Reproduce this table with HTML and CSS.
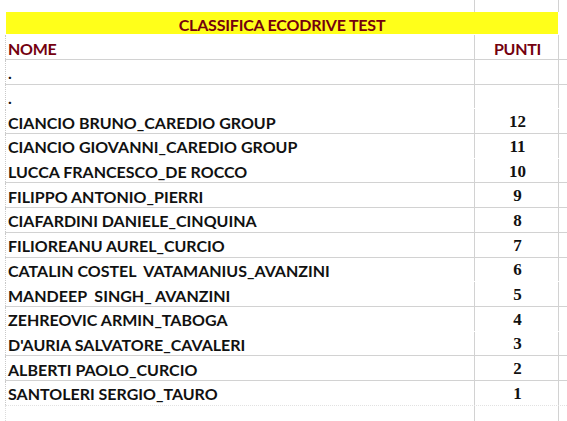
FILE: index.html
```html
<!DOCTYPE html>
<html lang="it">
<head>
<meta charset="utf-8">
<title>Classifica Ecodrive Test</title>
<link rel="stylesheet" href="styles.css">
</head>
<body>
<div class="sheet">
  <div class="row top">
    <div class="c name"></div><div class="c pts"></div><div class="c pad"></div>
  </div>
  <div class="row title nb">
    <div class="band">CLASSIFICA ECODRIVE TEST</div><div class="c pad"></div>
  </div>
  <div class="row head">
    <div class="c name">NOME</div><div class="c pts">PUNTI</div><div class="c pad"></div>
  </div>
  <div class="row"><div class="c name">.</div><div class="c pts"></div><div class="c pad"></div></div>
  <div class="row nb"><div class="c name">.</div><div class="c pts"></div><div class="c pad"></div></div>
  <div class="row"><div class="c name">CIANCIO BRUNO_CAREDIO GROUP</div><div class="c pts">12</div><div class="c pad"></div></div>
  <div class="row nb"><div class="c name">CIANCIO GIOVANNI_CAREDIO GROUP</div><div class="c pts">11</div><div class="c pad"></div></div>
  <div class="row"><div class="c name">LUCCA FRANCESCO_DE ROCCO</div><div class="c pts">10</div><div class="c pad"></div></div>
  <div class="row"><div class="c name">FILIPPO ANTONIO_PIERRI</div><div class="c pts">9</div><div class="c pad"></div></div>
  <div class="row"><div class="c name">CIAFARDINI DANIELE_CINQUINA</div><div class="c pts">8</div><div class="c pad"></div></div>
  <div class="row"><div class="c name">FILIOREANU AUREL_CURCIO</div><div class="c pts">7</div><div class="c pad"></div></div>
  <div class="row nb"><div class="c name">CATALIN COSTEL&nbsp; VATAMANIUS_AVANZINI</div><div class="c pts">6</div><div class="c pad"></div></div>
  <div class="row"><div class="c name">MANDEEP&nbsp; SINGH_ AVANZINI</div><div class="c pts">5</div><div class="c pad"></div></div>
  <div class="row nb"><div class="c name">ZEHREOVIC ARMIN_TABOGA</div><div class="c pts">4</div><div class="c pad"></div></div>
  <div class="row"><div class="c name">D'AURIA SALVATORE_CAVALERI</div><div class="c pts">3</div><div class="c pad"></div></div>
  <div class="row"><div class="c name">ALBERTI PAOLO_CURCIO</div><div class="c pts">2</div><div class="c pad"></div></div>
  <div class="row faint"><div class="c name">SANTOLERI SERGIO_TAURO</div><div class="c pts">1</div><div class="c pad"></div></div>
  <div class="row nb last"><div class="c name"></div><div class="c pts"></div><div class="c pad"></div></div>
</div>
</body>
</html>
```
FILE: styles.css
```css
* { box-sizing: border-box; margin: 0; padding: 0; }
html, body { background: #ffffff; }
body { width: 567px; height: 421px; overflow: hidden; }

.sheet {
  margin-left: 5px;
  font-family: "Lato", "Liberation Sans", sans-serif;
  font-weight: 700;
  font-size: 16px;
  color: #111111;
}

.row {
  display: grid;
  grid-template-columns: 470px 84px 8px;
  height: 24.7px;
  border-bottom: 1px solid #d2d2d2;
}
.row.nb { border-bottom-color: transparent; }
.row.faint { border-bottom: 1px dotted #e2e2e2; }

.c {
  display: flex;
  align-items: center;
  padding-top: 2px;
  white-space: nowrap;
}
.name {
  padding-left: 2px;
  border-left: 1px dotted #c9c9c9;
  border-right: 1px solid #d2d2d2;
}
.pts {
  justify-content: center;
  border-right: 1px solid #d2d2d2;
  font-family: "Liberation Serif", "Times New Roman", serif;
  font-size: 17px;
  padding-left: 2px;
}

.row.top { height: 12px; border-bottom: none; }
.row.top .name { border-left-color: transparent; }

.row.title { height: 23px; grid-template-columns: 554px 8px; }
.band {
  background: #ffff1a;
  margin-left: 1px;
  margin-right: 1px;
  display: flex;
  align-items: center;
  justify-content: center;
  padding-top: 2px;
  color: #74000f;
  font-size: 16px;
  letter-spacing: -0.2px;
}

.row.head { height: 25px; }
.row.head .name { color: #74000f; letter-spacing: -0.3px; }
.row.head .pts {
  color: #74000f;
  font-family: "Lato", "Liberation Sans", sans-serif;
  font-size: 16px;
  letter-spacing: -0.3px;
}

.row.last { height: 20px; }
.row.last .name { border-left-color: #dcdcdc; }
```
